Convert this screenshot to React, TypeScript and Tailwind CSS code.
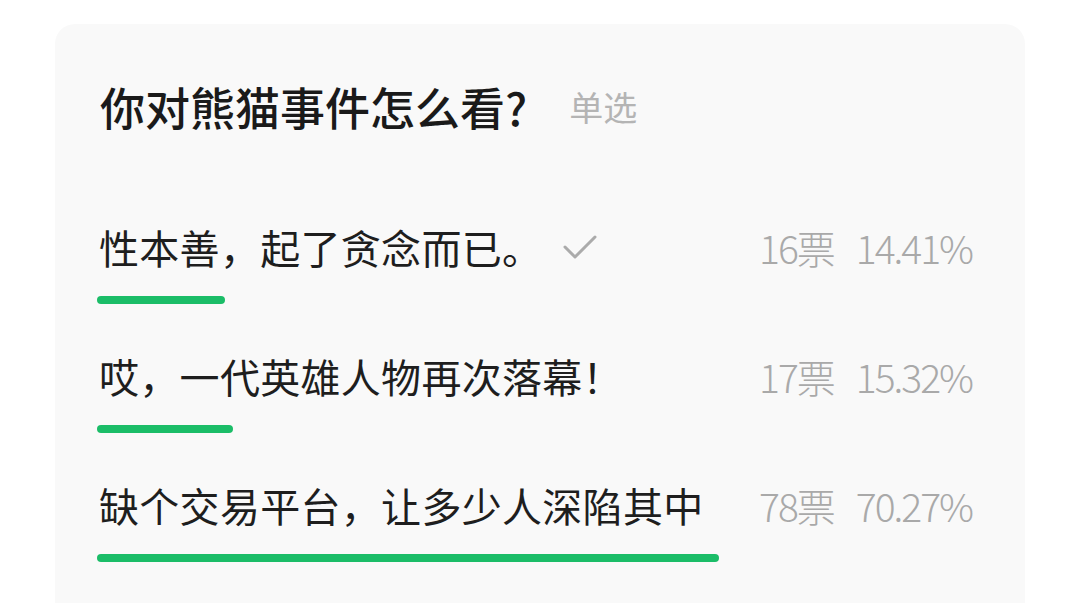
import React from "react";

const options = [
  { text: "性本善，起了贪念而已。", votes: "16票", pct: "14.41%", w: 14.41, checked: true },
  { text: "哎，一代英雄人物再次落幕！", votes: "17票", pct: "15.32%", w: 15.32, checked: false },
  { text: "缺个交易平台，让多少人深陷其中", votes: "78票", pct: "70.27%", w: 70.27, checked: false },
];

export default function App() {
  return (
    <div
      className="w-[1080px] h-[603px] bg-white pt-[24px] px-[55px] overflow-hidden"
      style={{ fontFamily: '"Noto Sans CJK SC", "Noto Sans", sans-serif' }}
    >
      <div className="h-full bg-[#f9f9f9] rounded-t-[20px] pl-[42px] pr-[53px] pt-[53px]">
        <div className="flex items-center h-[60px]">
          <span className="text-[45px] leading-[60px] font-medium text-[#1a1a1a] pl-[3px]">你对熊猫事件怎么看?</span>
          <span className="ml-[42px] text-[34px] leading-[60px] text-[#b4b4b4]">单选</span>
        </div>
        <div className="mt-[85px] flex flex-col gap-[47px]">
          {options.map((o, i) => (
            <div key={i} className="flex flex-col">
              <div className="flex items-center h-[50px]">
                <span className="text-[40px] leading-[50px] text-[#1e1e1e] pl-[2px] whitespace-nowrap tracking-[0.3px]">{o.text}</span>
                {o.checked && (
                  <svg className="ml-[20px]" width="36" height="30" viewBox="0 0 36 30" fill="none">
                    <path d="M3 15 L13 25 L33 5" stroke="#ababab" strokeWidth="3" strokeLinecap="round" strokeLinejoin="round" />
                  </svg>
                )}
                <div className="ml-auto flex items-center gap-[22px] text-[39px] leading-[50px] font-light text-[#a9a9a9] whitespace-nowrap tracking-[-2px]">
                  <span>{o.votes}</span>
                  <span>{o.pct}</span>
                </div>
              </div>
              <div className="mt-[24px] h-[8px] w-[885px]">
                <div className="h-full rounded-full bg-[#1bbd68]" style={{ width: `${o.w}%` }} />
              </div>
            </div>
          ))}
        </div>
      </div>
    </div>
  );
}
